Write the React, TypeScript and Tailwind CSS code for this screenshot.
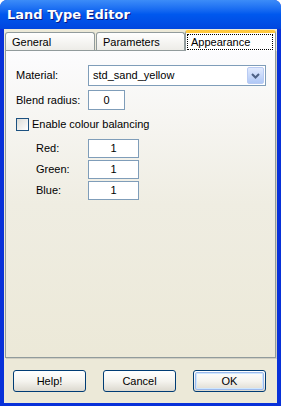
function TextBox({ value, width }: { value: string; width: string }) {
  return (
    <div
      className={`${width} h-[20px] border border-[#7F9DB9] bg-white flex items-center justify-center text-[11px] text-black`}
    >
      {value}
    </div>
  );
}

function Button({ label, isDefault }: { label: string; isDefault?: boolean }) {
  return (
    <div className="w-[73px] h-[22px] rounded-[3px] border border-[#003C74] bg-gradient-to-b from-[#FFFFFF] via-[#F5F4EF] to-[#DCD9CF] p-[1px]">
      <div
        className={`w-full h-full rounded-[2px] flex items-center justify-center text-[11px] text-black ${
          isDefault ? "border border-[#9DB9EB] shadow-[inset_0_0_0_1px_#CEE7FF]" : ""
        }`}
      >
        {label}
      </div>
    </div>
  );
}

function ColourRow({ label }: { label: string }) {
  return (
    <div className="flex items-center h-[19px]">
      <span className="w-[72px] pl-[20px] text-[11px]">{label}</span>
      <div className="w-[51px] h-[19px] border border-[#7F9DB9] bg-white flex items-center justify-center text-[11px]">
        1
      </div>
    </div>
  );
}

export default function App() {
  return (
    <div
      className="w-[281px] h-[406px] flex flex-col bg-[#0831D9] rounded-t-[7px] overflow-hidden text-black"
      style={{ fontFamily: "Tahoma, 'Liberation Sans', Arial, sans-serif" }}
    >
      {/* title bar */}
      <div className="h-[29px] shrink-0 flex items-center pl-[7px] bg-gradient-to-b from-[#3C8CF8] via-[#0058EE] to-[#0046DF]">
        <span className="text-white font-bold text-[13px] [text-shadow:1px_1px_0_#0A1883]" style={{ fontFamily: "'Trebuchet MS', 'DejaVu Sans', sans-serif" }}>
          Land Type Editor
        </span>
      </div>

      {/* body */}
      <div className="flex-1 mx-[4px] mb-[3px] bg-[#ECE9D8] flex flex-col">
        {/* tabs */}
        <div className="h-[21px] flex items-end pl-[1px] pt-[1px]">
          <div className="w-[90px] h-[19px] border border-b-0 border-[#919B9C] rounded-t-[3px] bg-gradient-to-b from-white to-[#ECEBE6] text-[11px] flex items-center pl-[6px] -mb-[1px]">
            General
          </div>
          <div className="w-[89px] h-[19px] ml-[1px] border border-b-0 border-[#919B9C] rounded-t-[3px] bg-gradient-to-b from-white to-[#ECEBE6] text-[11px] flex items-center pl-[6px] -mb-[1px]">
            Parameters
          </div>
          <div className="relative w-[91px] h-[21px] border-t-[3px] border-t-[#FFC83C] border-x border-x-[#919B9C] rounded-t-[3px] bg-white text-[11px] flex items-start pt-[1px] pl-[1px] -mb-[1px] z-10">
            <div className="w-[86px] h-[16px] border border-dotted border-black flex items-center pl-[3px]">
              Appearance
            </div>
          </div>
        </div>

        {/* panel */}
        <div className="h-[308px] ml-[1px] mr-[1px] border border-[#919B9C] bg-gradient-to-b from-[#FCFCFE] via-[#EFEDE2] to-[#ECE9D8] shadow-[1px_1px_0_#D0CEC2] flex flex-col pl-[10px] pt-[14px]">
          <div className="flex items-center h-[21px]">
            <span className="w-[72px] text-[11px]">Material:</span>
            <div className="w-[178px] h-[21px] border border-[#7F9DB9] bg-white flex items-center justify-between pl-[4px] pr-[1px]">
              <span className="text-[11px]">std_sand_yellow</span>
              <div className="w-[17px] h-[17px] rounded-[2px] border border-[#B9CBF3] bg-gradient-to-b from-[#E1EAFE] to-[#B0C8F6] flex items-center justify-center">
                <svg width="9" height="6" viewBox="0 0 9 6">
                  <path d="M1 1 L4.5 4.5 L8 1" stroke="#4D6185" strokeWidth="2" fill="none" />
                </svg>
              </div>
            </div>
          </div>
          <div className="flex items-center h-[20px] mt-[4px]">
            <span className="w-[72px] text-[11px]">Blend radius:</span>
            <TextBox value="0" width="w-[37px]" />
          </div>
          <div className="flex items-center h-[13px] mt-[8px]">
            <div className="w-[13px] h-[13px] border border-[#1C5180] bg-gradient-to-br from-[#DCDCD7] to-white" />
            <span className="ml-[3px] text-[11px]">Enable colour balancing</span>
          </div>
          <div className="flex flex-col gap-[2px] mt-[8px]">
            <ColourRow label="Red:" />
            <ColourRow label="Green:" />
            <ColourRow label="Blue:" />
          </div>
        </div>

        {/* buttons */}
        <div className="flex justify-center gap-[17px] mt-[12px] ml-[-2px]">
          <Button label="Help!" />
          <Button label="Cancel" />
          <Button label="OK" isDefault />
        </div>
      </div>
    </div>
  );
}
